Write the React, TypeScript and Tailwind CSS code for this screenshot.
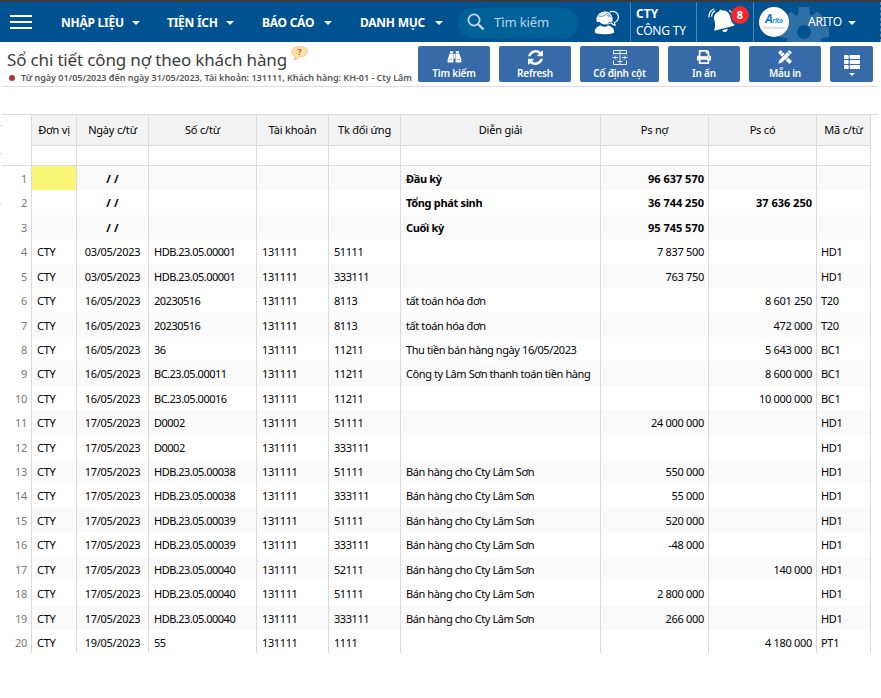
import React from "react";
import { FaPrint, FaThList } from "react-icons/fa";

const cols = [
  { t: "Đơn vị", w: "w-[45px]", a: "text-left pl-[5px] tracking-[-0.3px]" },
  { t: "Ngày c/từ", w: "w-[72px]", a: "text-center tracking-[-0.3px]" },
  { t: "Số c/từ", w: "w-[108px]", a: "text-left pl-[5px] tracking-[-0.5px]" },
  { t: "Tài khoản", w: "w-[72px]", a: "text-left pl-[5px] tracking-[-0.38px]" },
  { t: "Tk đối ứng", w: "w-[72px]", a: "text-left pl-[5px] tracking-[-0.42px]" },
  { t: "Diễn giải", w: "w-[200px]", a: "text-left pl-[5px] tracking-[-0.41px]" },
  { t: "Ps nợ", w: "w-[108px]", a: "text-right pr-[4px] tracking-[-0.3px]" },
  { t: "Ps có", w: "w-[108px]", a: "text-right pr-[4px] tracking-[-0.3px]" },
  { t: "Mã c/từ", w: "w-[54px]", a: "text-left pl-[4px] tracking-[-0.3px]" },
];

const boldCols = [
  "text-left",
  "text-center tracking-[0.1px]",
  "text-left",
  "text-left",
  "text-left",
  "text-left pl-[5px] tracking-[-0.33px]",
  "text-right pr-[4px] tracking-[0px]",
  "text-right pr-[4px] tracking-[0px]",
  "text-left",
];

const C = "CTY";
const K = "131111";
const LS = "Bán hàng cho Cty Lâm Sơn";
const rows: string[][] = [
  ["", "/ /", "", "", "", "Đầu kỳ", "96 637 570", "", ""],
  ["", "/ /", "", "", "", "Tổng phát sinh", "36 744 250", "37 636 250", ""],
  ["", "/ /", "", "", "", "Cuối kỳ", "95 745 570", "", ""],
  [C, "03/05/2023", "HDB.23.05.00001", K, "51111", "", "7 837 500", "", "HD1"],
  [C, "03/05/2023", "HDB.23.05.00001", K, "333111", "", "763 750", "", "HD1"],
  [C, "16/05/2023", "20230516", K, "8113", "tất toán hóa đơn", "", "8 601 250", "T20"],
  [C, "16/05/2023", "20230516", K, "8113", "tất toán hóa đơn", "", "472 000", "T20"],
  [C, "16/05/2023", "36", K, "11211", "Thu tiền bán hàng ngày 16/05/2023", "", "5 643 000", "BC1"],
  [C, "16/05/2023", "BC.23.05.00011", K, "11211", "Công ty Lâm Sơn thanh toán tiền hàng", "", "8 600 000", "BC1"],
  [C, "16/05/2023", "BC.23.05.00016", K, "11211", "", "", "10 000 000", "BC1"],
  [C, "17/05/2023", "D0002", K, "51111", "", "24 000 000", "", "HD1"],
  [C, "17/05/2023", "D0002", K, "333111", "", "", "", "HD1"],
  [C, "17/05/2023", "HDB.23.05.00038", K, "51111", LS, "550 000", "", "HD1"],
  [C, "17/05/2023", "HDB.23.05.00038", K, "333111", LS, "55 000", "", "HD1"],
  [C, "17/05/2023", "HDB.23.05.00039", K, "51111", LS, "520 000", "", "HD1"],
  [C, "17/05/2023", "HDB.23.05.00039", K, "333111", LS, "-48 000", "", "HD1"],
  [C, "17/05/2023", "HDB.23.05.00040", K, "52111", LS, "", "140 000", "HD1"],
  [C, "17/05/2023", "HDB.23.05.00040", K, "51111", LS, "2 800 000", "", "HD1"],
  [C, "17/05/2023", "HDB.23.05.00040", K, "333111", LS, "266 000", "", "HD1"],
  [C, "19/05/2023", "55", K, "1111", "", "", "4 180 000", "PT1"],
];

function Caret() {
  return <span className="h-0 w-0 border-x-4 border-t-4 border-x-transparent border-t-white" />;
}

function MenuItem({ label, cls }: { label: string; cls: string }) {
  return (
    <div className={`flex h-full shrink-0 items-center justify-between pt-[1px] tracking-[-0.25px] ${cls}`}>
      <span className="whitespace-nowrap text-[12px] font-bold text-white">{label}</span>
      <Caret />
    </div>
  );
}

function ToolButton({ label, cls, children }: { label: string; cls: string; children: React.ReactNode }) {
  return (
    <button className={`flex h-9 shrink-0 flex-col items-center rounded-[2px] bg-[#366aa8] pt-[3px] text-white ${cls}`}>
      <span className="flex h-4 items-center justify-center">{children}</span>
      <span className="mt-[1px] whitespace-nowrap text-[10px] font-semibold leading-[14px] tracking-[-0.2px]">{label}</span>
    </button>
  );
}

function BinocularsIcon() {
  return (
    <svg width="15" height="14" viewBox="0 0 15 14" fill="#fff">
      <path d="M3 1.200h3.200V3H3zM8.800 1.200H12V3H8.800zM2.700 3.600h3.700v9H.6V9.500zM12.300 3.600H8.600v9h5.800V9.500zM6.800 4h1.400v4.500H6.800z" />
      <path d="M2 9.500h3M10 9.500h3" stroke="#366aa8" strokeWidth=".6" />
    </svg>
  );
}

function RefreshIcon() {
  return (
    <svg width="15" height="15" viewBox="0 0 1536 1536" fill="#fff">
      <path d="M1511 928q0 5-1 7-64 268-268 434.500T764 1536q-146 0-282.500-55T238 1324l-129 129q-19 19-45 19t-45-19-19-45V960q0-26 19-45t45-19h448q26 0 45 19t19 45-19 45l-137 137q71 66 161 102t187 36q134 0 250-65t186-179q11-17 53-117 8-23 30-23h192q13 0 22.500 9.500t9.500 22.500zm25-800v448q0 26-19 45t-45 19h-448q-26 0-45-19t-19-45 19-45l138-138Q969 256 768 256q-134 0-250 65T332 500q-11 17-53 117-8 23-30 23H50q-13 0-22.500-9.500T18 608v-7q65-268 270-434.500T768 0q146 0 284 55.500T1297 212l130-129q19-19 45-19t45 19 19 45z" />
    </svg>
  );
}

function FreezeIcon() {
  return (
    <svg width="16" height="15" viewBox="0 0 16 15" fill="none" stroke="#e4ecf5" strokeWidth="1">
      <path d="M1.500 4.500v-4h13v4M1.500 10.500v4h13v-4M8 .5v14M1.500 3.500h13" />
      <path d="M.5 7.500H6M10 7.500h5.500M4 5.500l-2 2 2 2M12 5.500l2 2-2 2M5.500 11.500h5" />
    </svg>
  );
}

function DesignIcon() {
  return (
    <svg width="16" height="16" viewBox="0 0 15 15">
      <path d="M1 3.400 3.400 1l10.600 10.600-2.400 2.400z" fill="#fff" />
      <path d="M5 3.200 3.800 4.400M7 5.200 5.800 6.400M10.400 8.600 9.200 9.800" stroke="#366aa8" strokeWidth=".8" />
      <path d="M11.600.8 14.200 3.400 4.600 13 .8 14.200 2 10.400z" fill="#fff" stroke="#366aa8" strokeWidth=".6" />
      <path d="m9.800 2.600 2.600 2.600" stroke="#366aa8" strokeWidth=".8" />
    </svg>
  );
}

function SupportIcon() {
  return (
    <svg width="26" height="25" viewBox="0 0 26 25">
      <path d="M15.500 2.200C20-.2 25 3 24.300 8c-.3 2.500-2 4-4 4.600l1 2.600c-2 0-3.300-1-4-2.300" fill="none" stroke="#fff" strokeWidth="1.200" />
      <circle cx="10.500" cy="8.700" r="5.900" fill="#fff" />
      <path d="M3.600 9C3 1 17.500-1 17.700 8.500" fill="none" stroke="#fff" strokeWidth="1.400" />
      <rect x="2.500" y="7" width="3" height="5" rx="1" fill="#fff" />
      <rect x="15.500" y="7" width="3" height="5" rx="1" fill="#fff" />
      <path d="M5.500 6.300c3.500.5 5.500-.8 6.500-2 1 1.200 2 1.800 3.800 2" fill="none" stroke="#005291" strokeWidth=".6" />
      <path d="M17.500 11c0 2-2 3.200-5 3" fill="none" stroke="#fff" strokeWidth="1" />
      <path d="M.8 22c0-3.500 2.500-5.800 6.200-6.500 2 1.800 5 1.800 7 0 3.700.7 6.200 3 6.200 6.500 0 3-19.400 3-19.400 0z" fill="#fff" />
    </svg>
  );
}

function BellIcon() {
  return (
    <svg width="27" height="27" viewBox="0 0 27 27">
      <g fill="#fff">
        <path d="M11.300 4.600c-.5-1.900 2.300-2.700 3-1 4.200-.3 7 2.300 7.800 5.900.8 3.800 1.400 6.200 4 7.700.7.500.4 1.400-.3 1.600L7.400 23.600c-.8.200-1.400-.6-1-1.300 1.300-3 .9-5.600-.1-9.200-1.100-3.900 1-7.500 5-8.500z" />
        <path d="m14.200 23.300 5.300-1.500c.3 1.600-.6 2.900-2 3.200-1.500.4-2.900-.300-3.300-1.700z" />
      </g>
      <path d="M1 10.500C.7 6.500 2.800 3.300 6.200 1.800M3.700 9.800c-.1-2.800 1.200-4.900 3.500-6M21 3.200c2 .9 3.200 2.500 3.800 4.600" fill="none" stroke="#fff" strokeWidth="1.200" />
    </svg>
  );
}

function Gear() {
  return (
    <svg className="absolute left-[25px] top-[4px]" width="50" height="36" viewBox="-25 -26 50 36">
      <g fill="#2f70a6">
        <circle r="18.500" />
        <path d="M-5-25H5l1.500 10h-13zM-5 25H5l1.500-10h-13z" />
        <path transform="rotate(45)" d="M-5-24H5l1.500 10h-13zM-5 24H5l1.500-10h-13z" />
        <path transform="rotate(90)" d="M-5-25H5l1.500 10h-13zM-5 25H5l1.500-10h-13z" />
        <path transform="rotate(135)" d="M-5-24H5l1.500 10h-13zM-5 24H5l1.500-10h-13z" />
      </g>
      <circle r="7" fill="#005291" />
    </svg>
  );
}

export default function App() {
  return (
    <div className="flex h-[698px] w-[881px] flex-col overflow-hidden bg-white font-['Noto_Sans','Open_Sans',sans-serif] text-black">
      <header className="flex h-[42px] shrink-0 items-center border-t-2 border-[#3b3c42] bg-[#005291]">
        <div className="ml-[10px] flex w-[22px] shrink-0 flex-col gap-[4px]">
          <span className="h-[2px] bg-white" />
          <span className="h-[2px] bg-white" />
          <span className="h-[2px] bg-white" />
        </div>
        <MenuItem label="NHẬP LIỆU" cls="ml-[29px] w-[79px]" />
        <MenuItem label="TIỆN ÍCH" cls="ml-[27px] w-[67px]" />
        <MenuItem label="BÁO CÁO" cls="ml-[28px] w-[70px]" />
        <MenuItem label="DANH MỤC" cls="ml-[28px] w-[83px]" />
        <div className="ml-[15px] mt-[2px] flex h-[30px] w-[120px] shrink-0 items-center rounded-full bg-[#006098] pl-[9px]">
          <svg className="-mt-[2px]" width="18" height="18" viewBox="0 0 18 18" fill="none" stroke="#c6dbea">
            <circle cx="7" cy="7" r="5.600" strokeWidth="1.700" />
            <path d="m11.200 11.200 5.300 5.300" strokeWidth="2.300" />
          </svg>
          <span className="ml-[9px] text-[13px] tracking-[-0.1px] text-[#bcd4e5]">Tìm kiếm</span>
        </div>
        <div className="ml-[16px] w-[36px] shrink-0"><SupportIcon /></div>
        <div className="flex h-full w-[66px] shrink-0 flex-col border-l border-[#4b85b2] pl-[5px] pt-[3px] text-[12px] leading-[17px] text-white">
          <span className="font-bold">CTY</span>
          <span className="whitespace-nowrap tracking-[-0.2px]">CÔNG TY</span>
        </div>
        <div className="relative h-full w-[57px] shrink-0 border-l border-[#4b85b2] pl-[11px] pt-[5px]">
          <BellIcon />
          <span className="absolute left-[34px] top-[4px] flex h-[18px] w-[18px] items-center justify-center rounded-full bg-[#f7272d] text-[11px] font-bold text-white">8</span>
        </div>
        <div className="relative flex h-full w-[127px] shrink-0 items-center overflow-hidden border-l border-[#4b85b2]">
          <Gear />
          <div className="relative ml-[5px] flex h-[30px] w-[30px] shrink-0 flex-col items-center justify-center rounded-full bg-white">
            <span className="text-[7px] font-bold italic leading-[10px] tracking-[-0.4px] text-[#2a9ae0]"><span className="text-[12px] text-[#1672c4]">A</span>rito</span>
            <span className="whitespace-nowrap text-[3px] leading-[4px] text-[#9aa7b5]">Smart Solution</span>
          </div>
          <span className="relative ml-[19px] mr-[6px] text-[12px] tracking-[-0.2px] text-white">ARITO</span>
          <span className="relative flex pt-[2px]"><Caret /></span>
        </div>
        <div className="h-full w-px shrink-0 border-l border-dashed border-[#7b7f88]" />
      </header>

      <section className="ml-[2px] flex h-[45px] w-[876px] shrink-0 border-b border-[#dedede]">
        <div className="w-[416px] shrink-0 pl-[5px]">
          <div className="flex h-[30px] items-start">
            <h1 className="whitespace-nowrap pt-[6px] text-[17px] leading-[24px] tracking-[-0.16px] text-[#3d3d3d]">Sổ chi tiết công nợ theo khách hàng</h1>
            <svg className="ml-[4px] mt-[4px] shrink-0" width="17" height="15" viewBox="0 0 17 15">
              <path d="M8.500.6c4.500 0 7.800 2 7.800 5s-3.300 5.200-7.300 5.200C7 12.500 5 13.500 2.500 14c1-1.300 1.500-2.500 1.400-3.700C1.800 9.300.700 7.600.700 5.700c0-3 3.300-5.100 7.800-5.100z" fill="#ffe2a8" stroke="#e9b98a" strokeWidth=".8" />
              <text x="8.500" y="9" textAnchor="middle" fontSize="9.500" fontWeight="700" fill="#e4572e">?</text>
            </svg>
          </div>
          <div className="flex h-[12px] items-center">
            <span className="ml-[2px] h-[6px] w-[6px] rounded-full bg-[#b73034]" />
            <span className="ml-[6px] whitespace-nowrap text-[9px] font-semibold leading-[12px] tracking-[-0.02px] text-[#555]">Từ ngày 01/05/2023 đến ngày 31/05/2023, Tài khoản: 131111, Khách hàng: KH-01 - Cty Lâm</span>
          </div>
        </div>
        <div className="flex gap-[9px] pt-[4px]">
          <ToolButton label="Tìm kiếm" cls="w-[72px]"><BinocularsIcon /></ToolButton>
          <ToolButton label="Refresh" cls="w-[72px]"><RefreshIcon /></ToolButton>
          <ToolButton label="Cố định cột" cls="w-[79px]"><FreezeIcon /></ToolButton>
          <ToolButton label="In ấn" cls="w-[72px]"><FaPrint size={14} /></ToolButton>
          <ToolButton label="Mẫu in" cls="w-[72px]"><DesignIcon /></ToolButton>
          <button className="flex h-9 w-[43px] flex-col items-center rounded-[2px] bg-[#366aa8] pt-[8px] text-white">
            <FaThList size={16} />
            <span className="mt-[3px] h-0 w-0 border-x-[3px] border-t-[3px] border-x-transparent border-t-white" />
          </button>
        </div>
      </section>

      <div className="flex h-[27px] shrink-0" />

      <main className="flex">
        <div className="flex w-[2px] shrink-0 flex-col pt-[11px]">
          <span className="h-px bg-[#dedede]" />
          <span className="mt-[27px] h-px bg-[#dedede]" />
          <span className="mt-[50px] h-px bg-[#dedede]" />
        </div>
        <div className="w-[876px] shrink-0 text-[11px]">
          <div className="flex h-[32px] border-t border-[#dadada]">
            <div className="w-[29px] shrink-0" />
            <div className="flex border-l border-[#dadada]">
              {cols.map((c) => (
                <div key={c.t} className={`flex h-[31px] shrink-0 items-center justify-center whitespace-nowrap border-b border-r border-[#dadada] bg-[#f2f2f2] tracking-[-0.2px] ${c.w}`}>{c.t}</div>
              ))}
            </div>
          </div>
          <div className="flex h-[20px] w-[869px] border-b border-[#dadada]">
            <div className="w-[29px] shrink-0" />
            <div className="flex border-l border-[#dadada]">
              {cols.map((c) => (
                <div key={c.t} className={`shrink-0 border-r border-[#dadada] ${c.w}`} />
              ))}
            </div>
          </div>
          <div className="flex h-[487px] flex-col overflow-hidden">
            {rows.map((r, i) => (
              <div key={i} className="flex h-[24.43px] shrink-0">
                <div className="w-[29px] shrink-0 pr-[4px] text-right leading-[25.4px] tracking-[-0.3px] text-[#777]">{i + 1}</div>
                <div className={`flex border-l border-[#dadada] ${i % 2 === 0 ? "bg-[#fafafa]" : "bg-white"}`}>
                  {cols.map((c, j) => (
                    <div key={c.t} className={`shrink-0 whitespace-nowrap border-r border-[#dadada] leading-[25.4px] ${c.w} ${i < 3 ? `font-bold ${boldCols[j]}` : c.a} ${i === 0 && j === 0 ? "bg-[#fbf776]" : ""}`}>{r[j]}</div>
                  ))}
                </div>
              </div>
            ))}
          </div>
        </div>
      </main>
    </div>
  );
}
